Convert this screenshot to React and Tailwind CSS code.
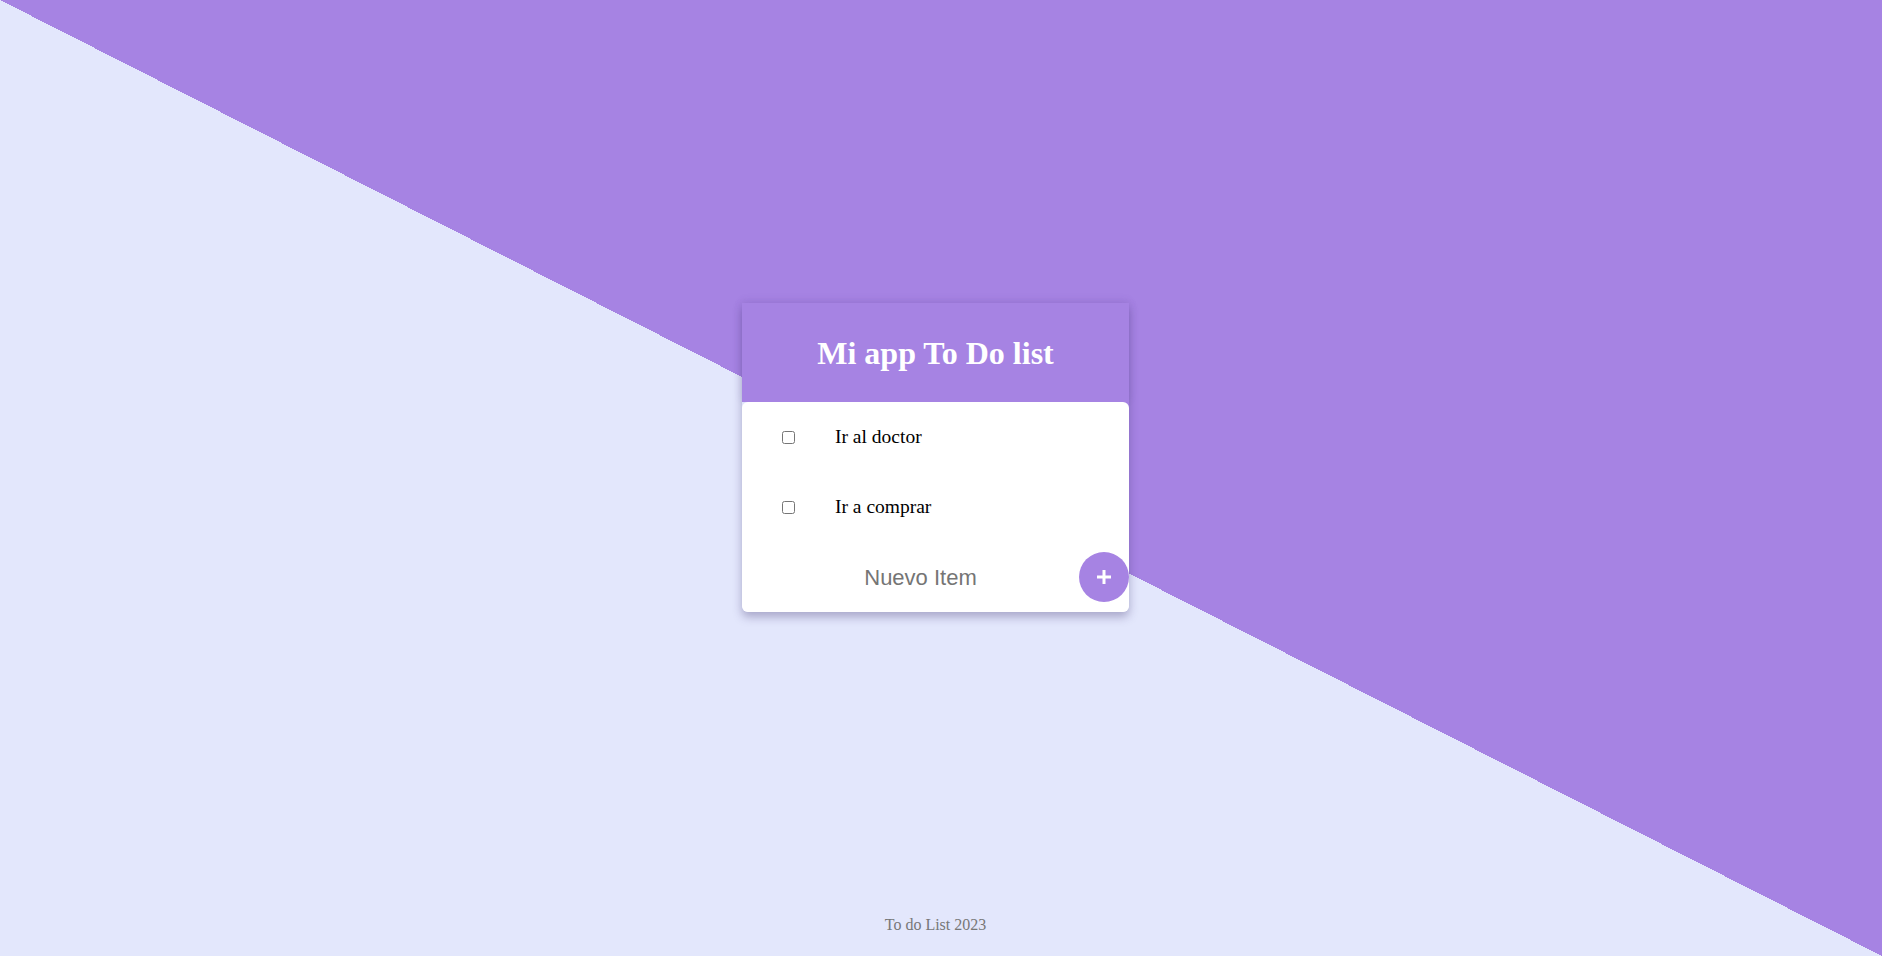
import { useState } from 'react'

const items = [
  { id: 1, text: 'Ir al doctor' },
  { id: 2, text: 'Ir a comprar' },
]

function TodoItem({ text }) {
  return (
    <li className="flex items-center h-[70px] pl-[40px]">
      <input type="checkbox" className="m-0 w-[13px] h-[13px]" />
      <span className="ml-[40px] text-[19.5px] text-black">{text}</span>
    </li>
  )
}

export default function App() {
  const [nuevo, setNuevo] = useState('')

  return (
    <div
      className="min-h-screen flex flex-col pr-[11px] bg-[linear-gradient(to_top_right,#e3e7fc_50%,#a683e3_50%)]"
      style={{ fontFamily: '"Liberation Serif", "Times New Roman", serif' }}
    >
      <main className="flex-1 flex items-center justify-center pt-[2px]">
        <div className="w-[387px] shadow-[0_5px_10px_rgba(60,50,110,0.35)] rounded-b-md">
          {/* Cabecera */}
          <div className="h-[99px] bg-[#a683e3] flex items-center justify-center shadow-[0_-2px_8px_rgba(80,60,140,0.12)]">
            <h1 className="text-[32px] font-bold text-white">Mi app To Do list</h1>
          </div>

          {/* Lista */}
          <div className="bg-white rounded-md">
            <ul>
              {items.map((item) => (
                <TodoItem key={item.id} text={item.text} />
              ))}
            </ul>
            <div className="flex items-center h-[70px]">
              <input
                value={nuevo}
                onChange={(e) => setNuevo(e.target.value)}
                placeholder="Nuevo Item"
                className="flex-1 min-w-0 pl-5 text-center text-[22px] outline-none placeholder:text-[#757575] bg-transparent"
                style={{ fontFamily: '"Liberation Sans", Arial, sans-serif' }}
              />
              <button className="w-[50px] h-[50px] rounded-full bg-[#a683e3] flex items-center justify-center shrink-0">
                <svg width="16" height="16" viewBox="0 0 16 16">
                  <path d="M8 1v14M1 8h14" stroke="white" strokeWidth="3" />
                </svg>
              </button>
            </div>
          </div>
        </div>
      </main>

      <footer className="pb-[19px] text-center text-[16px] text-[#777]">To do List 2023</footer>
    </div>
  )
}
